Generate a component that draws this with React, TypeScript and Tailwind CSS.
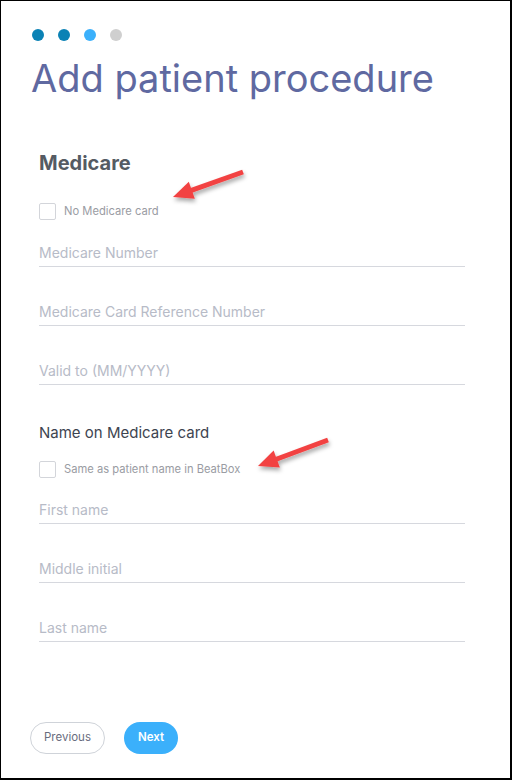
import { useState } from "react";

const steps = ["bg-[#0b82b5]", "bg-[#0b82b5]", "bg-[#3bb0fb]", "bg-[#cfcfcf]"];

function Field({ placeholder, className = "" }: { placeholder: string; className?: string }) {
  return (
    <input
      placeholder={placeholder}
      className={
        "block w-full h-[28px] border-b border-[#d6d8de] bg-transparent text-[14px] text-[#3d4450] outline-none placeholder:text-[#b7bbc7] " +
        className
      }
    />
  );
}

function Check({ label, className = "" }: { label: string; className?: string }) {
  const [on, setOn] = useState(false);
  return (
    <label className={"flex items-center gap-[8px] cursor-pointer " + className}>
      <span
        onClick={() => setOn(!on)}
        className={
          "w-[17px] h-[17px] rounded-[2px] border " +
          (on ? "bg-[#3bb0fb] border-[#3bb0fb]" : "border-[#d3d5da] bg-white")
        }
      />
      <span className="text-[11.2px] text-[#9a9ca3]">{label}</span>
    </label>
  );
}

// red annotation arrow, tip -> tail
function Arrow({ tip, tail }: { tip: [number, number]; tail: [number, number] }) {
  const dx = tail[0] - tip[0];
  const dy = tail[1] - tip[1];
  const len = Math.hypot(dx, dy);
  const ux = dx / len;
  const uy = dy / len;
  const bx = tip[0] + ux * 20;
  const by = tip[1] + uy * 20;
  const w = 9;
  const head = `${tip[0]},${tip[1]} ${bx - uy * w},${by + ux * w} ${bx + uy * w},${by - ux * w}`;
  return (
    <g filter="url(#shadow)">
      <line x1={bx - ux * 2} y1={by - uy * 2} x2={tail[0]} y2={tail[1]} stroke="#f24343" strokeWidth={5} />
      <polygon points={head} fill="#f24343" />
    </g>
  );
}

export default function App() {
  return (
    <div className="relative w-[512px] h-[780px] border border-r-2 border-b-2 border-black bg-white flex flex-col font-['Inter',sans-serif]">
      {/* Steps */}
      <div className="flex gap-[14px] pl-[31px] pt-[28px]">
        {steps.map((c, i) => (
          <span key={i} className={"w-[12px] h-[12px] rounded-full " + c} />
        ))}
      </div>

      <h1 className="pl-[30px] mt-[18px] text-[38px] leading-none text-[#5f69a1]">Add patient procedure</h1>

      <div className="pl-[38px] pr-[45px]">
        <h2 className="mt-[54px] text-[20px] leading-[24px] font-bold text-[#555b63]">Medicare</h2>
        <Check label="No Medicare card" className="mt-[28px]" />
        <Field placeholder="Medicare Number" className="mt-[19px]" />
        <Field placeholder="Medicare Card Reference Number" className="mt-[31px]" />
        <Field placeholder="Valid to (MM/YYYY)" className="mt-[31px]" />

        <h3 className="mt-[38px] text-[15px] leading-[20px] text-[#3d4450]">Name on Medicare card</h3>
        <Check label="Same as patient name in BeatBox" className="mt-[18px]" />
        <Field placeholder="First name" className="mt-[18px]" />
        <Field placeholder="Middle initial" className="mt-[31px]" />
        <Field placeholder="Last name" className="mt-[31px]" />
      </div>

      {/* Footer */}
      <div className="mt-auto flex gap-[19px] pl-[29px] pb-[24px]">
        <button className="h-[32px] px-[13px] rounded-full border border-[#cfd3d9] text-[11.5px] text-[#696d7e]">Previous</button>
        <button className="h-[32px] px-[14px] rounded-full bg-[#3bb0fb] text-[11.5px] font-semibold text-white">Next</button>
      </div>

      <svg className="absolute inset-0 pointer-events-none" width="512" height="780">
        <defs>
          <filter id="shadow" x="-20%" y="-40%" width="140%" height="200%">
            <feDropShadow dx="1" dy="3" stdDeviation="2" floodColor="#000" floodOpacity="0.35" />
          </filter>
        </defs>
        <Arrow tip={[172, 196]} tail={[242, 171]} />
        <Arrow tip={[257, 465]} tail={[327, 439]} />
      </svg>
    </div>
  );
}
